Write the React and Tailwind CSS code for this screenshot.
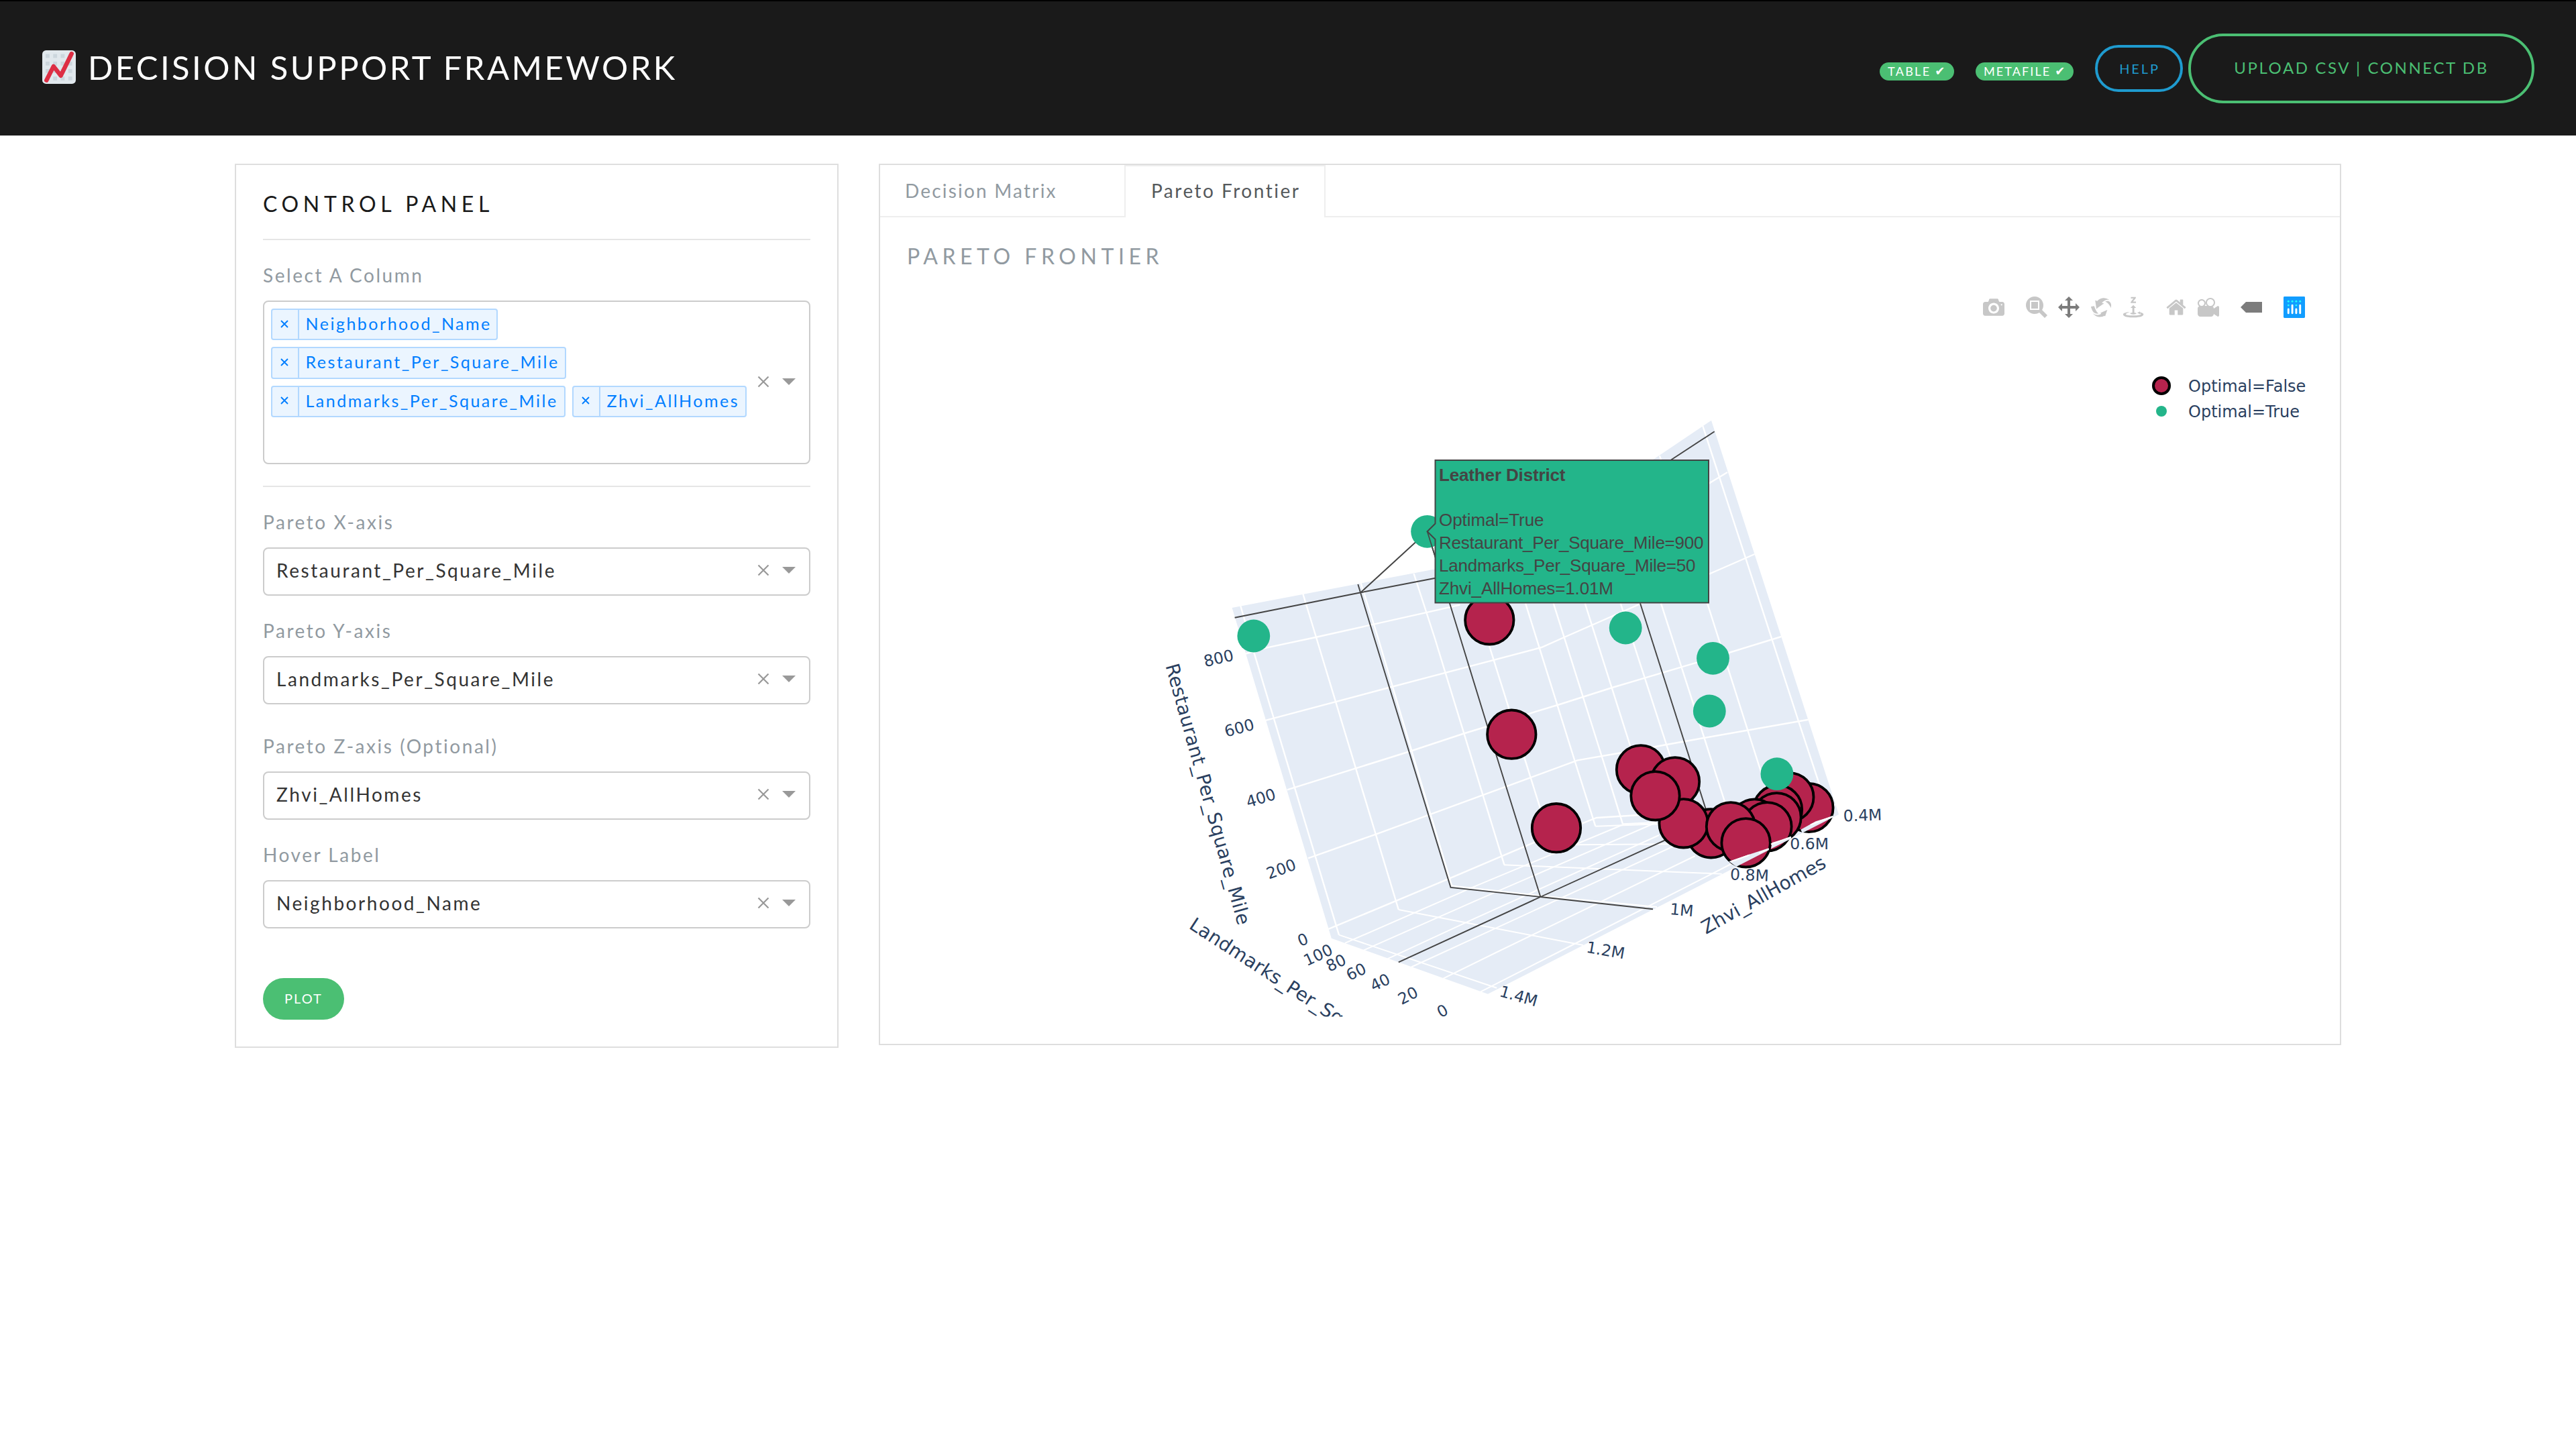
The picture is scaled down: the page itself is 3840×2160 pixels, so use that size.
import React from "react";

const LATO = "font-['Lato',sans-serif]";

function ChartEmoji() {
  const cols = [3.6, 11.7, 19.8, 27.9];
  const rows = [4, 12.1, 20.1, 28.1];
  return (
    <svg className="h-[50px] w-[50px]" viewBox="0 0 36 36">
      <rect width="36" height="36" rx="4" fill="#E1E8ED" />
      {rows.map((y) => cols.map((x) => <rect key={x + "-" + y} x={x} y={y} width="4.2" height="4.2" fill="#CCD6DD" />))}
      <path d="M4.5 32.2 L12.1 17.2 L19.9 27.2 L31.5 3.6" fill="none" stroke="#DD2E44" strokeWidth="4.6" strokeLinecap="round" strokeLinejoin="round" />
    </svg>
  );
}

function Badge({ label, className }) {
  return (
    <span className={"mt-[9px] flex h-[27px] items-center rounded-full bg-[#4bbf73] pb-[1px] pl-[12px] text-[18px] leading-none text-white " + className}>
      <span>{label}</span>
      <span className="ml-[6px] font-['DejaVu_Sans',sans-serif] text-[18px] leading-none tracking-normal">✔</span>
    </span>
  );
}

function Header() {
  return (
    <header className="flex h-[202px] items-center justify-between border-t-2 border-black bg-[#1a1a1a] pl-[63px] pr-[62px]">
      <div className="flex items-center gap-[18px]">
        <div className="-mt-[5px]"><ChartEmoji /></div>
        <h1 className="-mt-[5px] text-[49px] leading-[60px] tracking-[3.45px] whitespace-nowrap text-white">DECISION SUPPORT FRAMEWORK</h1>
      </div>
      <div className="flex items-center">
        <Badge label="TABLE" className="w-[111px] tracking-[2.3px]" />
        <Badge label="METAFILE" className="ml-[32px] w-[146px] tracking-[2.1px]" />
        <button className="ml-[32px] h-[70px] w-[131px] rounded-full border-4 border-[#1f9bcf] pb-[1px] pl-[2px] text-[20px] leading-none tracking-[2.9px] text-[#1f9bcf]">HELP</button>
        <button className="ml-[8px] h-[104px] w-[516px] rounded-full border-4 border-[#4bbf73] pb-[2px] text-[24px] leading-none tracking-[2.6px] whitespace-nowrap text-[#4bbf73]">UPLOAD CSV | CONNECT DB</button>
      </div>
    </header>
  );
}

function Indicators() {
  return (
    <div className="flex items-center gap-[19px]">
      <svg className="h-[18px] w-[18px]" viewBox="0 0 18 18">
        <path d="M1.5 1.5 L16.5 16.5 M16.5 1.5 L1.5 16.5" stroke="#999" strokeWidth="2.2" />
      </svg>
      <svg className="h-[10px] w-[20px]" viewBox="0 0 20 10">
        <path d="M0 0 H20 L10 10 Z" fill="#999" />
      </svg>
    </div>
  );
}

function Chip({ text, className }) {
  return (
    <div className={"flex h-[47.4px] items-stretch rounded-[4px] border-2 border-[#b2d8ff] bg-[#ebf5ff] text-[#007eff] " + className}>
      <div className="flex w-[40px] items-center justify-center border-r-2 border-[#b2d8ff] pr-[2px]">
        <svg className="-mt-[2px] h-[12px] w-[12px]" viewBox="0 0 12 12">
          <path d="M1 1 L11 11 M11 1 L1 11" stroke="#007eff" strokeWidth="1.9" />
        </svg>
      </div>
      <span className="pl-[9.5px] text-[25px] leading-[41px] tracking-[2.5px] whitespace-nowrap">{text}</span>
    </div>
  );
}

function Label({ children, className }) {
  return <div className={"h-[34px] text-[28px] leading-[35px] tracking-[2.55px] text-[#919aa1] " + className}>{children}</div>;
}

function Select({ value }) {
  return (
    <div className="mt-[21px] flex h-[72px] items-center justify-between rounded-[8px] border-2 border-[#ccc] pr-[20px] pb-[4px] pl-[18px]">
      <span className="text-[28px] leading-[66px] tracking-[2.55px] text-[#333]">{value}</span>
      <Indicators />
    </div>
  );
}

function ControlPanel() {
  return (
    <section className="h-[1318px] w-[900px] border-2 border-[#dedede] px-[40px] pt-[36px]">
      <h2 className="h-[44px] text-[32px] leading-[44px] tracking-[6.65px] text-[#1a1a1a]">CONTROL PANEL</h2>
      <div className="mt-[30px] h-[2px] bg-[#e5e5e5]" />
      <Label className="mt-[35px]">Select A Column</Label>
      <div className="mt-[21px] flex h-[244px] items-center justify-between rounded-[8px] border-2 border-[#ccc] pr-[20px] pl-[10px]">
        <div className="flex h-full flex-col items-start gap-[10px] pt-[10px]">
          <Chip text="Neighborhood_Name" className="w-[338px]" />
          <Chip text="Restaurant_Per_Square_Mile" className="w-[440px]" />
          <div className="flex gap-[10px]">
            <Chip text="Landmarks_Per_Square_Mile" className="w-[439px]" />
            <Chip text="Zhvi_AllHomes" className="w-[260px]" />
          </div>
        </div>
        <div className="-mt-[2px]"><Indicators /></div>
      </div>
      <div className="mt-[32px] h-[2px] bg-[#e5e5e5]" />
      <Label className="mt-[35px]">Pareto X-axis</Label>
      <Select value="Restaurant_Per_Square_Mile" />
      <Label className="mt-[35px]">Pareto Y-axis</Label>
      <Select value="Landmarks_Per_Square_Mile" />
      <Label className="mt-[45px]">Pareto Z-axis (Optional)</Label>
      <Select value="Zhvi_AllHomes" />
      <Label className="mt-[35px]">Hover Label</Label>
      <Select value="Neighborhood_Name" />
      <button className="mt-[74px] block h-[62px] w-[121px] rounded-full bg-[#4bbf73] pb-[2px] text-[20px] leading-none tracking-[2px] text-white">PLOT</button>
    </section>
  );
}

const ICONS = {
  camera: [1000, "m500 450c-83 0-150-67-150-150 0-83 67-150 150-150 83 0 150 67 150 150 0 83-67 150-150 150z m400 150h-120c-16 0-34 13-39 29l-31 93c-6 15-23 28-40 28h-340c-16 0-34-13-39-28l-31-94c-6-15-23-28-40-28h-120c-55 0-100-45-100-100v-450c0-55 45-100 100-100h800c55 0 100 45 100 100v450c0 55-45 100-100 100z m-400-550c-138 0-250 112-250 250 0 138 112 250 250 250 138 0 250-112 250-250 0-138-112-250-250-250z m365 380c-19 0-35 16-35 35 0 19 16 35 35 35 19 0 35-16 35-35 0-19-16-35-35-35z"],
  zoom: [1000, "m1000-25l-250 251c40 63 63 138 63 218 0 224-182 406-407 406-224 0-406-182-406-406s183-406 407-406c80 0 155 22 218 62l250-250 125 125z m-812 250l0 438 437 0 0-438-437 0z m62 375l313 0 0-312-313 0 0 312z"],
  pan: [1000, "m1000 350l-187 188 0-125-250 0 0 250 125 0-188 187-187-187 125 0 0-250-250 0 0 125-188-188 186-187 0 125 252 0 0-250-125 0 187-188 188 188-125 0 0 250 250 0 0-126 187 188z"],
  orbit: [1000, "m922 660c-5 4-9 7-14 11-359 263-580-31-580-31l-102 28 58-400c0 1 1 1 2 2 118 108 351 249 351 249s-62 27-100 42c88 83 222 183 347 122 16-8 30-17 44-27-2 1-4 2-6 4z m36-329c0 0 64 229-88 296-62 27-124 14-175-11 157-78 225-208 249-266 8-19 11-31 11-31 2 5 6 15 11 32-5-13-8-20-8-20z m-775-239c70-31 117-50 198-32-121 80-199 346-199 346l-96-15-58-12c0 0 55-226 155-287z m603 133l-317-139c0 0 4-4 19-14 7-5 24-15 24-15s-177-147-389 4c235-287 536-112 536-112l31-22 100 299-4-1z m-298-153c6-4 14-9 24-15 0 0-17 10-24 15z"],
  turntable: [1000, "m833 5l-17 108v41l-130-65 130-66c0 0 0 38 0 39 0-1 36-14 39-25 4-15-6-22-16-30-15-12-39-16-56-20-90-22-187-23-279-23-261 0-341 34-353 59 3 60 228 110 228 110-140-8-351-35-351-116 0-120 293-142 474-142 155 0 477 22 477 142 0 50-74 79-163 96z m-374 94c-58-5-99-21-99-40 0-24 65-43 144-43 79 0 143 19 143 43 0 19-42 34-98 40v216h87l-132 135-133-135h88v-216z m167 515h-136v1c16 16 31 34 46 52l84 109v54h-230v-71h124v-1c-16-17-28-32-44-51l-89-114v-51h245v72z"],
  home: [928.6, "m786 296v-267q0-15-11-26t-25-10h-214v214h-143v-214h-214q-15 0-25 10t-11 26v267q0 1 0 2t0 2l321 264 321-264q1-1 1-4z m124 39l-34-41q-5-5-12-6h-2q-7 0-12 3l-386 322-386-322q-7-4-13-4-7 2-12 7l-35 41q-4 5-3 13t6 12l401 334q18 15 42 15t43-15l136-114v109q0 8 5 13t13 5h107q8 0 13-5t5-13v-227l122-102q5-5 6-12t-4-13z"],
  movie: [1000, "m938 413l-188-125c0 37-17 71-44 94 64 38 107 107 107 187 0 121-98 219-219 219-121 0-219-98-219-219 0-61 25-117 66-156h-115c30 33 49 76 49 125 0 103-84 187-187 187s-188-84-188-187c0-57 26-107 65-141-38-22-65-62-65-109v-250c0-70 56-126 125-126h500c69 0 125 56 125 126l188-126c34 0 62 28 62 63v375c0 35-28 63-62 63z m-750 0c-69 0-125 56-125 125s56 125 125 125 125-56 125-125-56-125-125-125z m406-1c-87 0-157 70-157 157 0 86 70 156 157 156s156-70 156-156-70-157-156-157z"],
  tooltip: [1500, "m375 725l0 0-375-375 375-374 0-1 1125 0 0 750-1125 0z"],
};

function PlotIcon({ name, active }) {
  const [width, d] = ICONS[name];
  return (
    <svg className="h-[32px] w-[32px]" viewBox={"0 0 " + width + " 1000"}>
      <path d={d} transform="matrix(1 0 0 -1 0 850)" fill={active ? "#7c7c7c" : "#c7c7c7"} />
    </svg>
  );
}

function PlotlyMark() {
  return (
    <svg className="h-[32px] w-[32px]" viewBox="0 0 132 132">
      <rect width="132" height="132" rx="6" fill="#119dff" />
      <g fill="#25fefd">
        <circle cx="78" cy="54" r="6" />
        <circle cx="102" cy="30" r="6" />
        <circle cx="78" cy="30" r="6" />
        <circle cx="54" cy="30" r="6" />
        <circle cx="30" cy="30" r="6" />
        <circle cx="30" cy="54" r="6" />
      </g>
      <g fill="#fff">
        <rect x="24" y="72" width="12" height="36" rx="6" />
        <rect x="72" y="72" width="12" height="36" rx="6" />
        <rect x="48" y="48" width="12" height="60" rx="6" />
        <rect x="96" y="48" width="12" height="60" rx="6" />
      </g>
    </svg>
  );
}

function ModeBar() {
  return (
    <div className="flex h-[70px] items-end justify-end gap-[32px] pr-[52px]">
      <PlotIcon name="camera" />
      <div className="flex gap-[16px]">
        <PlotIcon name="zoom" />
        <PlotIcon name="pan" active />
        <PlotIcon name="orbit" />
        <PlotIcon name="turntable" />
      </div>
      <div className="flex gap-[16px]">
        <PlotIcon name="home" />
        <PlotIcon name="movie" />
      </div>
      <PlotIcon name="tooltip" active />
      <PlotlyMark />
    </div>
  );
}

// Wall grid: lines of constant Zhvi / Landmarks, then of constant Restaurant.
const WALL_GRID = [
  "1849.2,903 1869.6,973.7 1996,1393.6",
  "1942.2,885 1962,950 2084.8,1356",
  "2028.5,869 2054,950 2164.3,1321",
  "2107.5,855 2138.4,950 2242.4,1289.2",
  "2200,899 2313,1259",
  "2274,899.3 2349.3,1140 2378.3,1231.7",
  "2315.7,899.3 2391.7,1140 2419,1228.3",
  "2362.7,899.3 2467,1228",
  "2415.7,899.3 2489,1125 2512,1196",
  "2476,899.3 2570.7,1194 2576,1210",
  "2474,679.3 2545.3,900 2621.7,1140 2650,1225",
  "2538.3,635 2681,1075 2715,1178",
  "1857,974.5 1886.6,965.8 1961.2,950 2124.8,913.3 2176.5,901.7",
  "2530,732 2547.3,720.7 2575,704",
  "1886.6,1073.8 2070.5,1025 2298,965 2331.7,950 2443.3,901 2547,856 2615.7,826",
  "1918.7,1177.4 2101.8,1120 2182,1093.5 2325,1050 2403.3,1025 2529.3,987.7 2655.3,949",
  "1950,1279.4 2050.4,1243.8 2280.3,1159.6 2351.5,1133.4 2417.5,1122 2540,1100 2695.7,1072.7",
  "1980.3,1384.9 2081.7,1342.6 2159.8,1309.8 2283.3,1257.3 2380,1219 2443.3,1215 2736,1200",
];

const FLOOR_GRID = [
  "1996,1393.6 2231.2,1472.8",
  "2084.8,1356 2200,1378.3 2360,1409",
  "2164.3,1320.5 2298,1335.5 2470,1352",
  "2242,1289.3 2566.7,1302.7",
  "2313,1259.5 2490,1258.3",
  "2378.3,1231.7 2480,1228",
  "2419,1228.3 2470,1226",
  "2004.9,1405.9 2200,1320.7 2420,1229",
  "2032.6,1416.6 2200,1342.7 2466.7,1227",
  "2068.3,1429.3 2200,1368.3 2473,1245",
  "2104,1441.5 2200,1397.3 2500,1259",
  "2150.9,1458.9 2230,1420 2526.7,1276",
  "2206.7,1478.7 2321.7,1420 2600,1278 2715,1220",
];

const SPIKES = [
  "1840.6,920.7 2028.3,883.3 2139.7,861.7",
  "2490.7,685.7 2555.7,643.3",
  "2024.3,871 2048.2,950 2162.5,1322.9 2296.4,1337 2464,1355.3",
  "2160.9,899 2231.2,1128 2296.4,1337",
  "2084.8,1434.4 2296.4,1337 2480,1253.3 2545,1213",
  "2445,899.3 2545,1213",
];

const DOMINATED = [
  [2220.3, 924.3], [2253.3, 1094.7], [2320, 1234.2],
  [2446, 1147.3], [2497, 1165.3],
  [2696.4, 1204], [2667.3, 1188.3], [2650, 1206.7], [2648.5, 1218.3],
  [2550.6, 1242.3], [2509.6, 1227.3], [2467.5, 1186.3],
  [2615.6, 1227.5], [2634.4, 1232.3], [2580, 1232.3], [2602.6, 1256.3],
];

const OPTIMAL = [[1868.8, 948], [2423.2, 936], [2553.5, 981.3], [2548.3, 1060], [2648.9, 1153.7], [2127.6, 792.3]];

const TICKS = [
  ["800", 1816.5, 980.8, -13], ["600", 1847.3, 1084.8, -15], ["400", 1879.5, 1189.2, -17], ["200", 1909.8, 1295.2, -20], ["0", 1942, 1400.7, -22],
  ["100", 1964.7, 1423.3, -25], ["80", 1991.5, 1435.1, -25], ["60", 2021.4, 1448.2, -25], ["40", 2057.1, 1464, -26], ["20", 2098.6, 1483.8, -27], ["0", 2150, 1506.7, -28],
  ["1.4M", 2264, 1484.5, 16], ["1.2M", 2393.5, 1416.2, 10], ["1M", 2507, 1356.2, 5], ["0.8M", 2608, 1304, 2.5], ["0.6M", 2697.1, 1257.3, 0], ["0.4M", 2776.5, 1215, -2],
];

// Hover rows: text, baseline, drawn length.
const HOVER_LINES = [
  ["Optimal=True", 784, 156.5], ["Restaurant_Per_Square_Mile=900", 818, 394.5], ["Landmarks_Per_Square_Mile=50", 851.8, 382.5], ["Zhvi_AllHomes=1.01M", 885.6, 260],
];

function ParetoPlot() {
  return (
    <svg className="block h-[1082px] w-[2176px]" viewBox="1312 474 2176 1082">
      <defs>
        <clipPath id="scene"><rect x="1354" y="474" width="1850" height="1041.5" /></clipPath>
      </defs>
      <g clipPath="url(#scene)">
        <polygon fill="#e5ecf6" points="1836.6,906 2139.7,848.3 2300,780 2463.3,685.7 2551,626.7 2741,1214 2217.9,1481.8 1984.8,1398.8" />
        <g fill="none" stroke="#fff" strokeWidth="2">
          {FLOOR_GRID.map((p) => <polyline key={p} points={p} />)}
        </g>
        <g fill="none" stroke="#fff" strokeWidth="2.4">
          {WALL_GRID.map((p) => <polyline key={p} points={p} />)}
        </g>
        <g fill="none" stroke="#444" strokeWidth="1.9">
          {SPIKES.map((p) => <polyline key={p} points={p} />)}
          <path d="M2127.6 792.3 L2028.3 883.3 M2127.6 792.3 L2161 899" />
        </g>
        <g fill="#b5234d" stroke="#000" strokeWidth="3.8">
          {DOMINATED.map(([x, y]) => <circle key={x + "-" + y} cx={x} cy={y} r="36.2" />)}
        </g>
        <g fill="#e5ecf6">
          <polygon points="2684.3,1236.7 2706.7,1224.3 2731.7,1216.7 2741,1214 2686.7,1241.8" />
          <polygon points="2641.7,1256 2656.7,1251.7 2670,1247.3 2670,1250.3 2640,1265.3" />
          <polygon points="2577.3,1284 2606.7,1274 2636.7,1264.3 2636.7,1267.2 2588.3,1292" />
        </g>
        <g fill="none" stroke="#fff" strokeWidth="2">
          <path d="M2699 1229.5 L2732 1217" />
          <path d="M2640 1258.5 L2670 1247.6" />
          <path d="M2580 1284.5 L2608 1274.5 M2622 1271.5 L2636.7 1265.3" />
        </g>
        <g fill="#23b58a">
          {OPTIMAL.map(([x, y]) => <circle key={x + "-" + y} cx={x} cy={y} r="24.4" />)}
        </g>
        <path d="M2127.6 792.3 L2150 864" stroke="#444" strokeWidth="1.6" />
        <g className="font-['DejaVu_Sans',sans-serif]" fill="#2a3f5f">
          <g fontSize="23.5" textAnchor="middle">
            {TICKS.map(([t, x, y, a]) => (
              <text key={t + "-" + x} x={x} y={y + 8.5} transform={"rotate(" + a + " " + x + " " + y + ")"}>{t}</text>
            ))}
          </g>
          <g fontSize="28">
            <text x="1800.5" y="1193.3" textAnchor="middle" letterSpacing="0.3" transform="rotate(74.4 1800.5 1183.8)">Restaurant_Per_Square_Mile</text>
            <text transform="translate(1771 1383) rotate(33)" letterSpacing="0.3">Landmarks_Per_Square_Mile</text>
            <text transform="translate(2543 1393) rotate(-29.2)">Zhvi_AllHomes</text>
          </g>
        </g>
      </g>
      <circle cx="3222" cy="575" r="12" fill="#b5234d" stroke="#000" strokeWidth="4" />
      <circle cx="3222" cy="613" r="8" fill="#23b58a" />
      <g className="font-['DejaVu_Sans',sans-serif]" fill="#2a3f5f" fontSize="24">
        <text x="3262" y="583.7">Optimal=False</text>
        <text x="3262" y="621.5">Optimal=True</text>
      </g>
      <path d="M2127.6 792.3 L2139.5 804 V898.5 H2547 V686 H2139.5 V780.5 Z" fill="#23b58a" stroke="#444" strokeWidth="2" />
      <g className="font-['Liberation_Sans',sans-serif]" fill="#444" fontSize="26">
        <text x="2145" y="717" fontWeight="700" textLength="188.5">Leather District</text>
        {HOVER_LINES.map(([t, y, w]) => <text key={t} x="2145" y={y} textLength={w}>{t}</text>)}
      </g>
    </svg>
  );
}

function ResultsPanel() {
  return (
    <section className="h-[1314px] w-[2180px] border-2 border-[#dedede]">
      <nav className="flex h-[78px] text-[28px] leading-[76px] whitespace-nowrap">
        <div className="w-[364px] border-b-2 border-[#eee] pl-[37px] tracking-[2.2px] text-[#919aa1]">Decision Matrix</div>
        <div className="w-[300px] border-x-2 border-t-2 border-[#eee] pl-[38px] leading-[72px] tracking-[2.5px] text-[#55595c]">Pareto Frontier</div>
        <div className="flex-1 border-b-2 border-[#eee]" />
      </nav>
      <h2 className="mt-[36px] h-[44px] pl-[40px] text-[32px] leading-[44px] tracking-[6.55px] text-[#919aa1]">PARETO FRONTIER</h2>
      <ModeBar />
      <ParetoPlot />
    </section>
  );
}

export default function App() {
  return (
    <div className={"h-[2160px] w-[3840px] overflow-hidden bg-white " + LATO}>
      <Header />
      <main className="flex items-start gap-[60px] pt-[42px] pl-[350px]">
        <ControlPanel />
        <ResultsPanel />
      </main>
    </div>
  );
}
